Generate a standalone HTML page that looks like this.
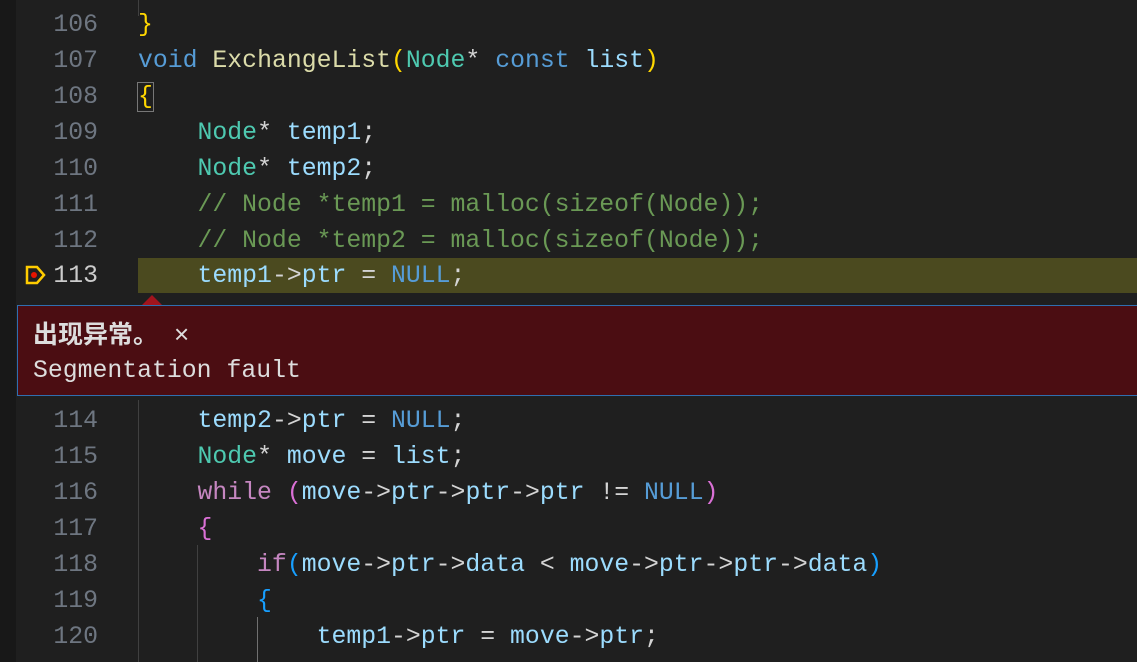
<!DOCTYPE html><html><head><style>
body{margin:0;width:1137px;height:662px;background:#1f1f1f;overflow:hidden;position:relative;font-family:"Liberation Mono",monospace;font-size:24.8px}
.g{position:absolute;left:0;top:0;width:16px;height:662px;background:#181818}
.l{position:absolute;left:0;height:36px;line-height:36px;white-space:pre;width:1137px}
.n{position:absolute;right:1039px;color:#6e7681;text-align:right}
.c{position:absolute;left:138px;color:#9cdcfe}
.k{color:#569cd6}.t{color:#4ec9b0}.f{color:#dcdcaa}.m{color:#6a9955}.y{color:#ffd700}.p{color:#da70d6}.w{color:#c586c0}.b{color:#179fff}.o{color:#d4d4d4}
.hl{position:absolute;left:138px;top:258px;width:999px;height:35px;background:#4b4a1f}
.wd{position:absolute;left:17px;top:305px;width:1120px;height:91px;background:#4b0d12;border:1px solid #2f6fb0;border-right:none;box-sizing:border-box}
.ig{position:absolute;width:1px;background:#404040}
</style></head><body>
<div class="g"></div>
<div class="hl"></div>
<div class="ig" style="left:138px;top:0;height:16px"></div>
<div class="ig" style="left:138px;top:400px;height:262px"></div>
<div class="ig" style="left:197px;top:545px;height:117px"></div>
<div class="ig" style="left:257px;top:617px;height:45px;background:#707070"></div>
<div class="l" style="top:7px"><span class="n">106</span><span class="c"><span class="y">}</span></span></div>
<div class="l" style="top:43px"><span class="n">107</span><span class="c"><span class="k">void</span> <span class="f">ExchangeList</span><span class="y">(</span><span class="t">Node</span><span class="o">*</span> <span class="k">const</span> list<span class="y">)</span></span></div>
<div class="l" style="top:79px"><span class="n">108</span><span class="c"><span class="y" style="outline:1px solid #777">{</span></span></div>
<div class="l" style="top:115px"><span class="n">109</span><span class="c">    <span class="t">Node</span><span class="o">*</span> temp1<span class="o">;</span></span></div>
<div class="l" style="top:151px"><span class="n">110</span><span class="c">    <span class="t">Node</span><span class="o">*</span> temp2<span class="o">;</span></span></div>
<div class="l" style="top:187px"><span class="n">111</span><span class="c">    <span class="m">// Node *temp1 = malloc(sizeof(Node));</span></span></div>
<div class="l" style="top:223px"><span class="n">112</span><span class="c">    <span class="m">// Node *temp2 = malloc(sizeof(Node));</span></span></div>
<div class="l" style="top:258px"><span class="n" style="color:#ccc">113</span><span class="c">    temp1<span class="o">-&gt;</span>ptr <span class="o">=</span> <span class="k">NULL</span><span class="o">;</span></span></div>
<svg style="position:absolute;left:25px;top:265px" width="22" height="20"><path d="M2 2h10l7 8-7 8H2z" fill="none" stroke="#ffcc00" stroke-width="2.5"/><circle cx="9" cy="10" r="3" fill="#e51400"/></svg>
<svg style="position:absolute;left:141px;top:294px" width="22" height="12"><path d="M0 12L11 1 22 12z" fill="#a1141d"/></svg>
<div class="wd"></div>
<div style="position:absolute;left:33px;top:318px;font-family:'Liberation Sans','Noto Sans CJK SC',sans-serif;font-weight:bold;font-size:25px;color:#ddd;line-height:32px">出现异常。<span style="font-weight:normal;margin-left:16px;font-size:26px">×</span></div>
<div style="position:absolute;left:33px;top:353px;color:#ddd;line-height:36px;white-space:pre">Segmentation fault</div>
<div class="l" style="top:403px"><span class="n">114</span><span class="c">    temp2<span class="o">-&gt;</span>ptr <span class="o">=</span> <span class="k">NULL</span><span class="o">;</span></span></div>
<div class="l" style="top:439px"><span class="n">115</span><span class="c">    <span class="t">Node</span><span class="o">*</span> move <span class="o">=</span> list<span class="o">;</span></span></div>
<div class="l" style="top:475px"><span class="n">116</span><span class="c">    <span class="w">while</span> <span class="p">(</span>move<span class="o">-&gt;</span>ptr<span class="o">-&gt;</span>ptr<span class="o">-&gt;</span>ptr <span class="o">!=</span> <span class="k">NULL</span><span class="p">)</span></span></div>
<div class="l" style="top:511px"><span class="n">117</span><span class="c">    <span class="p">{</span></span></div>
<div class="l" style="top:547px"><span class="n">118</span><span class="c">        <span class="w">if</span><span class="b">(</span>move<span class="o">-&gt;</span>ptr<span class="o">-&gt;</span>data <span class="o">&lt;</span> move<span class="o">-&gt;</span>ptr<span class="o">-&gt;</span>ptr<span class="o">-&gt;</span>data<span class="b">)</span></span></div>
<div class="l" style="top:583px"><span class="n">119</span><span class="c">        <span class="b">{</span></span></div>
<div class="l" style="top:619px"><span class="n">120</span><span class="c">            temp1<span class="o">-&gt;</span>ptr <span class="o">=</span> move<span class="o">-&gt;</span>ptr<span class="o">;</span></span></div>
</body></html>
